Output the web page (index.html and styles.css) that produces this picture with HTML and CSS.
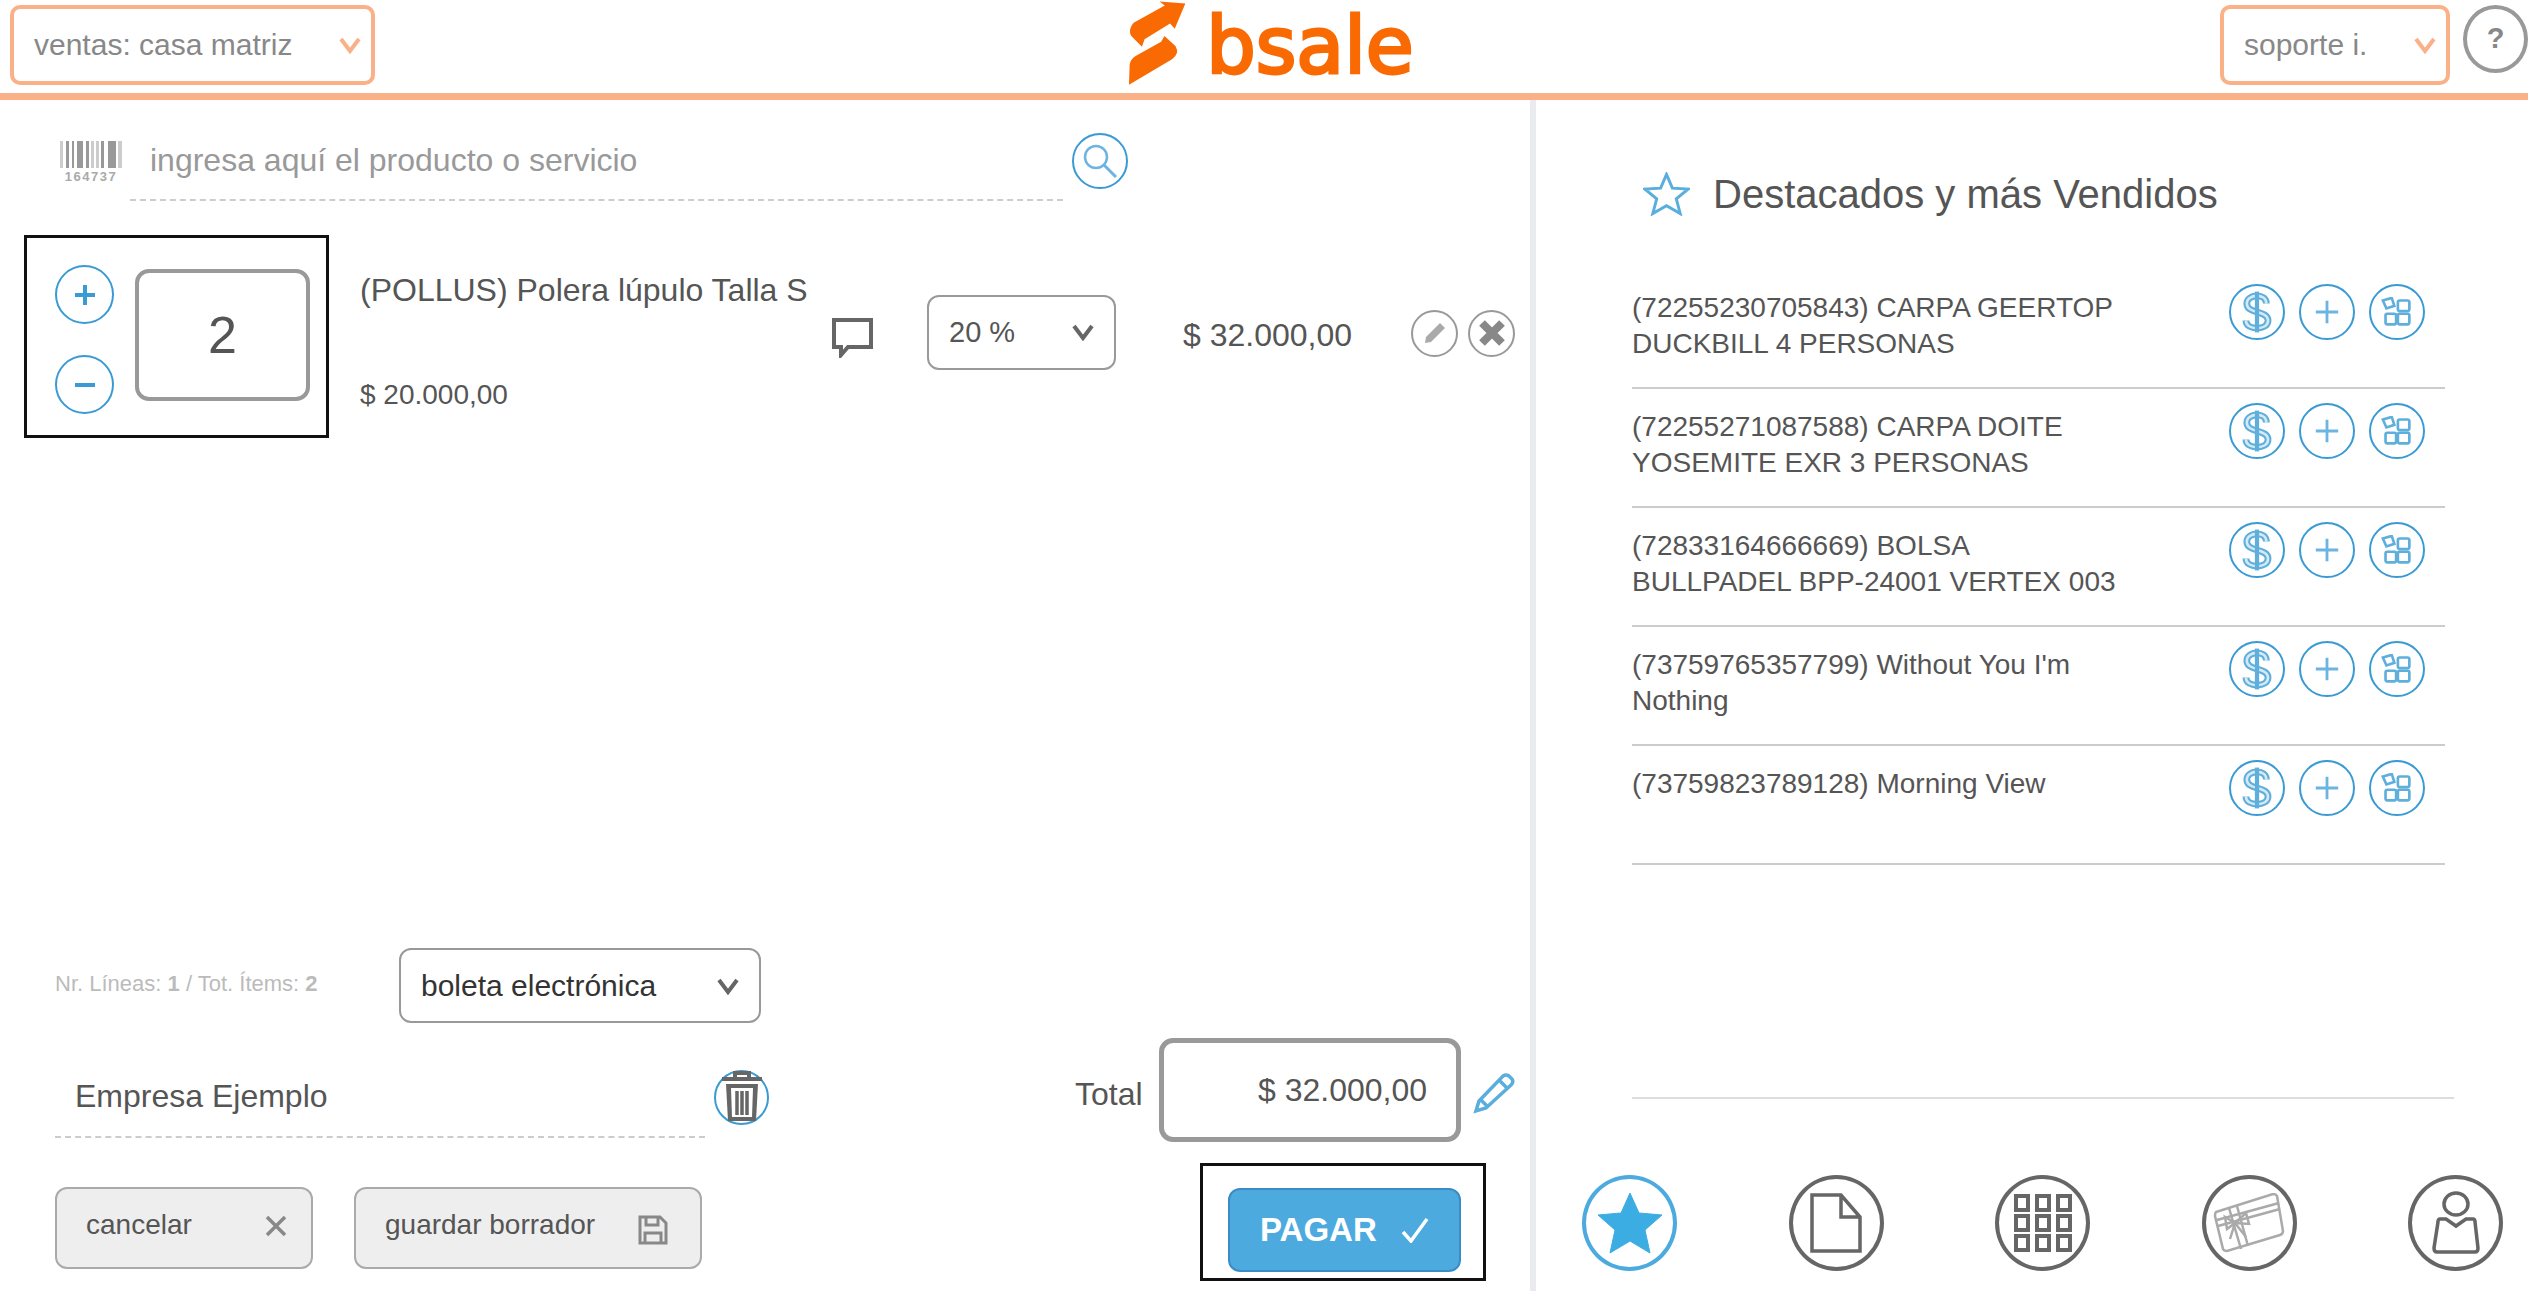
FILE: index.html
```html
<!DOCTYPE html>
<html lang="es">
<head>
  <meta charset="UTF-8" />
  <title>Bsale - Punto de venta</title>
  <link rel="stylesheet" href="styles.css">
</head>
<body>
  <!-- shared icons -->
  <svg class="sprite" width="0" height="0">
    <symbol id="i-chevron" viewBox="0 0 22 18"><path d="M2 3 L11 15 L20 3" fill="none" stroke-width="4"/></symbol>
    <symbol id="i-dollar" viewBox="0 0 40 50">
      <path d="M31 15 C31 9 26 6 20 6 C13 6 8 10 8 15 C8 21 13 23 20 25 C27 27 33 29 33 35 C33 41 27 44 20 44 C13 44 7 41 7 35" fill="none" stroke="#5fafdc" stroke-width="8"/>
      <path d="M31 15 C31 9 26 6 20 6 C13 6 8 10 8 15 C8 21 13 23 20 25 C27 27 33 29 33 35 C33 41 27 44 20 44 C13 44 7 41 7 35" fill="none" stroke="#d5eaf6" stroke-width="3"/>
      <path d="M17.5 1 H22.5 V49 H17.5 Z" fill="#5fafdc"/>
    </symbol>
    <symbol id="i-plus" viewBox="0 0 30 30"><path d="M15 3 V27 M3 15 H27" fill="none" stroke="#6db5e0" stroke-width="3"/></symbol>
    <symbol id="i-group" viewBox="0 0 36 34" >
      <g fill="none" stroke="#5fafdc" stroke-width="3">
        <path d="M2 4 L12 1 L15 10 L6 13 Z"/>
        <rect x="19" y="4" width="13" height="12" rx="2"/>
        <rect x="5" y="19" width="12" height="12" rx="2"/>
        <rect x="19" y="19" width="13" height="12" rx="2"/>
      </g>
    </symbol>
  </svg>

  <header class="top-bar">
    <div class="top-left">
      <div class="orange-select select-branch">
        <span>ventas: casa matriz</span>
        <svg class="chevron"><use href="#i-chevron"/></svg>
      </div>
    </div>
    <div class="logo">
      <svg class="logo-mark" viewBox="85 0 175 255">
        <path d="M180 4 L258 10 L226 86 L212 70 L135 118 L127 140 L95 108 Q84 90 102 68 L196 16 Z"/>
        <path d="M195 108 L228 138 Q242 160 218 178 L88 255 L90 195 Q92 178 108 168 L185 125 Z"/>
      </svg>
      <span class="logo-text">bsale</span>
    </div>
    <div class="top-right">
      <div class="orange-select select-user">
        <span>soporte i.</span>
        <svg class="chevron"><use href="#i-chevron"/></svg>
      </div>
      <div class="help-btn">?</div>
    </div>
  </header>

  <main class="pos">
    <!-- Sale -->
    <section class="sale">
      <div class="search-row">
        <svg class="barcode" viewBox="0 0 62 44">
          <g fill="#999">
            <rect x="0" y="0" width="3" height="27" fill="#ccc"/><rect x="6" y="0" width="3" height="27"/><rect x="12" y="0" width="2" height="27"/>
            <rect x="17" y="0" width="6" height="27"/><rect x="26" y="0" width="3" height="27"/><rect x="31" y="0" width="3" height="27" fill="#ccc"/>
            <rect x="36" y="0" width="3" height="27" fill="#ccc"/><rect x="41" y="0" width="3" height="27"/><rect x="48" y="0" width="8" height="27"/>
            <rect x="58" y="0" width="4" height="27" fill="#ccc"/>
          </g>
          <text x="31" y="40" class="barcode-num" text-anchor="middle">164737</text>
        </svg>
        <div class="search-input">ingresa aquí el producto o servicio</div>
        <div class="round-btn search-btn">
          <svg width="36" height="36" viewBox="0 0 36 36"><circle cx="14" cy="14" r="11" fill="none" stroke="#6db5e0" stroke-width="2.5"/><path d="M22 22 L34 34" stroke="#6db5e0" stroke-width="3"/></svg>
        </div>
      </div>

      <div class="item-row">
        <div class="qty-box">
          <div class="qty-btns">
            <div class="round-btn qty-btn"><svg width="24" height="24" viewBox="0 0 24 24"><path d="M12 2 V22 M2 12 H22" stroke="#3a9ad4" stroke-width="4"/></svg></div>
            <div class="round-btn qty-btn"><svg width="24" height="24" viewBox="0 0 24 24"><path d="M2 12 H22" stroke="#3a9ad4" stroke-width="4"/></svg></div>
          </div>
          <div class="qty-value">2</div>
        </div>
        <div class="item-info">
          <div class="item-name">(POLLUS) Polera lúpulo Talla S</div>
          <div class="item-price">$ 20.000,00</div>
        </div>
        <svg class="comment-icon" viewBox="0 0 41 40"><path d="M2 2 H39 V29 H16 L9 37 V29 H2 Z" fill="none" stroke="#666" stroke-width="4"/></svg>
        <div class="gray-select discount-select">
          <span>20 %</span>
          <svg class="chevron"><use href="#i-chevron"/></svg>
        </div>
        <div class="item-total">$ 32.000,00</div>
        <div class="round-btn gray-btn edit-btn">
          <svg width="26" height="26" viewBox="0 0 26 26"><path d="M18 3 L23 8 L9 22 L3 23 L4 17 Z" fill="#aaa"/></svg>
        </div>
        <div class="round-btn gray-btn remove-btn">
          <svg width="30" height="30" viewBox="0 0 30 30"><path d="M5 5 L25 25 M25 5 L5 25" stroke="#888" stroke-width="8"/></svg>
        </div>
      </div>

      <div class="sale-bottom">
        <div class="doc-row">
          <div class="line-count">Nr. Líneas: <b>1</b> / Tot. Ítems: <b>2</b></div>
          <div class="gray-select doc-select">
            <span>boleta electrónica</span>
            <svg class="chevron"><use href="#i-chevron"/></svg>
          </div>
        </div>

        <div class="client-row">
          <div class="client-name">Empresa Ejemplo</div>
          <div class="round-btn trash-btn">
            <svg width="44" height="54" viewBox="0 0 44 54">
              <path d="M15 7 V2 H29 V7 M2 8 H42" fill="none" stroke="#666" stroke-width="4"/>
              <path d="M6 13 H38 L36 50 H8 Z" fill="#666"/>
              <path d="M11 17 H33 L32 46 H12 Z" fill="#fff"/>
              <path d="M17 20 V44 M22 20 V44 M27 20 V44" stroke="#666" stroke-width="3.5"/>
            </svg>
          </div>
          <div class="total-label">Total</div>
          <div class="total-box">$ 32.000,00</div>
          <svg class="total-edit" viewBox="0 0 42 42">
            <path d="M30 4 Q33 2 36 4 L39 7 Q41 10 38 13 L13 36 L3 39 L6 29 Z M26 8 L35 17 M8 28 L15 35" fill="none" stroke="#5aaedd" stroke-width="3.5"/>
          </svg>
        </div>

        <div class="action-row">
          <div class="soft-btn cancel-btn">
            <span>cancelar</span>
            <svg class="btn-icon" width="22" height="22" viewBox="0 0 22 22"><path d="M2 2 L20 20 M20 2 L2 20" stroke="#888" stroke-width="3.5"/></svg>
          </div>
          <div class="soft-btn draft-btn">
            <span>guardar borrador</span>
            <svg class="btn-icon" width="30" height="30" viewBox="0 0 30 30"><path d="M2 2 H22 L28 8 V28 H2 Z M8 2 V10 H20 V2 M7 28 V18 H23 V28" fill="none" stroke="#888" stroke-width="3"/></svg>
          </div>
          <div class="pay-frame">
            <div class="pay-btn">
              <span>PAGAR</span>
              <svg width="28" height="25" viewBox="0 0 28 25"><path d="M2 14 L10 23 L26 1" fill="none" stroke="#fff" stroke-width="3.5"/></svg>
            </div>
          </div>
        </div>
      </div>
    </section>

    <!-- Catalog -->
    <aside class="catalog">
      <div class="catalog-title">
        <svg class="title-star" viewBox="0 0 48 44"><path d="M24 2 L30 16 L46 17 L34 27 L38 42 L24 34 L10 42 L14 27 L2 17 L18 16 Z" fill="none" stroke="#5aaedd" stroke-width="3"/></svg>
        <h2>Destacados y más Vendidos</h2>
      </div>

      <div class="product-list">
        <div class="product">
          <div class="product-name">(72255230705843) CARPA GEERTOP DUCKBILL 4 PERSONAS</div>
          <div class="product-actions">
            <div class="round-btn"><svg width="34" height="44"><use href="#i-dollar"/></svg></div>
            <div class="round-btn"><svg width="28" height="28"><use href="#i-plus"/></svg></div>
            <div class="round-btn"><svg width="32" height="30"><use href="#i-group"/></svg></div>
          </div>
        </div>
        <div class="product">
          <div class="product-name">(72255271087588) CARPA DOITE YOSEMITE EXR 3 PERSONAS</div>
          <div class="product-actions">
            <div class="round-btn"><svg width="34" height="44"><use href="#i-dollar"/></svg></div>
            <div class="round-btn"><svg width="28" height="28"><use href="#i-plus"/></svg></div>
            <div class="round-btn"><svg width="32" height="30"><use href="#i-group"/></svg></div>
          </div>
        </div>
        <div class="product">
          <div class="product-name">(72833164666669) BOLSA BULLPADEL BPP-24001 VERTEX 003</div>
          <div class="product-actions">
            <div class="round-btn"><svg width="34" height="44"><use href="#i-dollar"/></svg></div>
            <div class="round-btn"><svg width="28" height="28"><use href="#i-plus"/></svg></div>
            <div class="round-btn"><svg width="32" height="30"><use href="#i-group"/></svg></div>
          </div>
        </div>
        <div class="product">
          <div class="product-name">(73759765357799) Without You I'm Nothing</div>
          <div class="product-actions">
            <div class="round-btn"><svg width="34" height="44"><use href="#i-dollar"/></svg></div>
            <div class="round-btn"><svg width="28" height="28"><use href="#i-plus"/></svg></div>
            <div class="round-btn"><svg width="32" height="30"><use href="#i-group"/></svg></div>
          </div>
        </div>
        <div class="product">
          <div class="product-name">(73759823789128) Morning View</div>
          <div class="product-actions">
            <div class="round-btn"><svg width="34" height="44"><use href="#i-dollar"/></svg></div>
            <div class="round-btn"><svg width="28" height="28"><use href="#i-plus"/></svg></div>
            <div class="round-btn"><svg width="32" height="30"><use href="#i-group"/></svg></div>
          </div>
        </div>
      </div>

      <div class="list-end"></div>

      <nav class="tabs">
        <div class="tab tab-active">
          <svg width="66" height="62" viewBox="0 0 66 62"><path d="M33 1 L42 21 L65 23 L48 38 L53 61 L33 49 L13 61 L18 38 L1 23 L24 21 Z" fill="#3cade3" stroke="#3cade3" stroke-width="1" stroke-linejoin="round"/></svg>
        </div>
        <div class="tab">
          <svg width="52" height="60" viewBox="0 0 52 60"><path d="M2 2 H31 L50 24 V58 H2 Z M31 2 V24 H50" fill="none" stroke="#666" stroke-width="3.5"/></svg>
        </div>
        <div class="tab">
          <svg width="58" height="58" viewBox="0 0 58 58">
            <g fill="none" stroke="#666" stroke-width="4">
              <rect x="2" y="2" width="12" height="14"/><rect x="23" y="2" width="12" height="14"/><rect x="44" y="2" width="12" height="14"/>
              <rect x="2" y="22" width="12" height="14"/><rect x="23" y="22" width="12" height="14"/><rect x="44" y="22" width="12" height="14"/>
              <rect x="2" y="42" width="12" height="14"/><rect x="23" y="42" width="12" height="14"/><rect x="44" y="42" width="12" height="14"/>
            </g>
          </svg>
        </div>
        <div class="tab">
          <svg width="72" height="60" viewBox="0 0 72 60">
            <g fill="none" stroke="#aaa" stroke-width="2.5">
              <path d="M3 19 L60 1 Q63 1 64 3 L70 38 Q70 41 67 42 L14 58 Q11 58 10 56 L2 23 Q2 20 3 19 Z"/>
              <path d="M4 27 L66 10 M5 33 L67 16 M16 15 L28 56 M24 13 L35 53"/>
              <path d="M22 30 L12 24 L14 36 Z M22 30 L33 20 L36 31 Z M22 30 L17 46 M22 30 L33 44"/>
            </g>
          </svg>
        </div>
        <div class="tab">
          <svg width="48" height="64" viewBox="0 0 48 64">
            <g fill="none" stroke="#666" stroke-width="3.5">
              <ellipse cx="24" cy="13" rx="12" ry="11"/>
              <path d="M8 28 H14 L24 35 L34 28 H41 Q43 28 43 31 L46 57 Q46 61 43 61 H5 Q2 61 2 57 L6 31 Q6 28 8 28 Z"/>
            </g>
          </svg>
        </div>
      </nav>
    </aside>
  </main>
</body>
</html>
```

FILE: styles.css
```css
* {
  box-sizing: border-box;
}

html, body {
  margin: 0;
  height: 1291px;
  overflow: hidden;
}

body {
  font-family: "Liberation Sans", Arial, sans-serif;
  background: #fff;
  color: #555;
}

.sprite {
  display: block;
  height: 0;
}

/* Top bar */
.top-bar {
  display: grid;
  grid-template-columns: 1fr auto 1fr;
  height: 100px;
  padding-top: 5px;
  border-bottom: 7px solid #fab188;
}

.top-left {
  padding-left: 10px;
}

.top-right {
  display: flex;
  justify-content: flex-end;
  align-items: flex-start;
}

.orange-select {
  display: flex;
  align-items: center;
  justify-content: space-between;
  height: 80px;
  border: 4px solid #fab188;
  border-radius: 10px;
  padding: 0 10px 0 20px;
  font-size: 30px;
  color: #888;
}

.orange-select .chevron {
  stroke: #fab188;
  width: 22px;
  height: 18px;
}

.select-branch {
  width: 365px;
}

.select-user {
  width: 230px;
  margin-right: 13px;
}

.help-btn {
  width: 65px;
  height: 68px;
  border: 4px solid #999;
  border-radius: 50%;
  text-align: center;
  font-size: 29px;
  font-weight: 700;
  line-height: 58px;
  color: #888;
}

.logo {
  display: flex;
  align-items: flex-start;
  margin-left: 14px;
  color: #f96a03;
}

.logo-mark {
  width: 58px;
  height: 85px;
  margin-top: -5px;
  fill: #f96a03;
}

/* DejaVu with a stroke comes nearest to the rounded wordmark */
.logo-text {
  margin-left: 20px;
  font-family: "DejaVu Sans", sans-serif;
  font-size: 78px;
  line-height: 84px;
  margin-top: -1px;
  -webkit-text-stroke: 3px #f96a03;
}

/* Layout */
.pos {
  display: flex;
  height: 1191px;
}

.sale {
  display: flex;
  flex-direction: column;
  width: 1536px;
  border-right: 6px solid #e9ebee;
}

.catalog {
  flex: 1;
  padding-left: 96px;
}

/* Round icon buttons */
.round-btn {
  display: flex;
  align-items: center;
  justify-content: center;
  flex-shrink: 0;
  width: 56px;
  height: 56px;
  border: 2px solid #3a9ad4;
  border-radius: 50%;
}

.gray-btn {
  width: 47px;
  height: 47px;
  border-color: #999;
}

/* Search */
.search-row {
  display: flex;
  align-items: flex-start;
  margin-top: 33px;
  padding-left: 60px;
}

.barcode {
  width: 62px;
  height: 44px;
  margin-top: 8px;
}

.barcode-num {
  font-family: "Liberation Sans", Arial, sans-serif;
  font-size: 13px;
  font-weight: 700;
  letter-spacing: 1.5px;
  fill: #aaa;
}

.search-input {
  width: 933px;
  height: 68px;
  margin-left: 8px;
  padding: 7px 0 0 20px;
  border-bottom: 2px dashed #ccc;
  font-size: 32px;
  line-height: 40px;
  color: #999;
}

.search-btn {
  margin-left: 9px;
}

/* Item line */
.item-row {
  display: flex;
  align-items: center;
  margin-top: 34px;
  padding-left: 24px;
  height: 203px;
}

.qty-box {
  display: flex;
  align-items: center;
  width: 305px;
  height: 203px;
  border: 3px solid #111;
  padding-left: 28px;
}

.qty-btns {
  display: flex;
  flex-direction: column;
  gap: 31px;
  margin-top: 6px;
}

.qty-btn {
  width: 59px;
  height: 59px;
}

.qty-value {
  width: 175px;
  height: 132px;
  margin-left: 21px;
  margin-top: -4px;
  border: 4px solid #999;
  border-radius: 14px;
  text-align: center;
  font-size: 52px;
  line-height: 124px;
}

.item-info {
  display: flex;
  flex-direction: column;
  justify-content: space-between;
  width: 472px;
  height: 138px;
  margin-left: 31px;
  margin-top: 9px;
}

.item-name {
  font-size: 32px;
  line-height: 36px;
  white-space: nowrap;
}

.item-price {
  font-size: 28px;
  line-height: 30px;
}

.comment-icon {
  width: 41px;
  height: 40px;
  margin-top: 3px;
}

.gray-select {
  display: flex;
  align-items: center;
  justify-content: space-between;
  border: 2px solid #999;
  border-radius: 12px;
}

.gray-select .chevron {
  stroke: #666;
  width: 22px;
  height: 18px;
}

.discount-select {
  width: 189px;
  height: 75px;
  margin-left: 54px;
  margin-top: -9px;
  padding: 0 20px 0 20px;
  font-size: 29px;
}

.item-total {
  width: 228px;
  margin-left: 67px;
  margin-top: -3px;
  font-size: 32px;
}

.edit-btn {
  margin-left: 0;
  margin-top: -7px;
}

.remove-btn {
  margin-left: 10px;
  margin-top: -7px;
}

/* Bottom of sale */
.sale-bottom {
  margin-top: auto;
  padding-left: 55px;
  padding-bottom: 10px;
}

.doc-row {
  display: flex;
  align-items: center;
}

.line-count {
  width: 344px;
  font-size: 22px;
  color: #bbb;
  margin-top: -4px;
}

.doc-select {
  width: 362px;
  height: 75px;
  padding: 0 20px;
  font-size: 30px;
  color: #333;
}

.client-row {
  display: flex;
  align-items: flex-start;
  margin-top: 15px;
  height: 104px;
}

.client-name {
  width: 650px;
  height: 100px;
  padding: 38px 0 0 20px;
  border-bottom: 2px dashed #ccc;
  font-size: 32px;
  line-height: 40px;
}

.trash-btn {
  width: 55px;
  height: 55px;
  margin: 32px 0 0 9px;
}

.total-label {
  width: 84px;
  margin-left: 306px;
  margin-top: 36px;
  font-size: 32px;
  line-height: 40px;
}

.total-box {
  width: 302px;
  height: 104px;
  border: 5px solid #999;
  border-radius: 14px;
  padding: 28px 29px 0 0;
  text-align: right;
  font-size: 32px;
  line-height: 38px;
}

.total-edit {
  width: 42px;
  height: 42px;
  margin: 34px 0 0 12px;
}

.action-row {
  display: flex;
  align-items: flex-start;
  margin-top: 21px;
  height: 118px;
}

.soft-btn {
  display: flex;
  justify-content: space-between;
  height: 82px;
  margin-top: 24px;
  padding: 0 24px 0 29px;
  background: #eee;
  border: 2px solid #aaa;
  border-radius: 12px;
  font-size: 28px;
  line-height: 71px;
  color: #555;
}

.btn-icon {
  margin-top: 26px;
}

.cancel-btn {
  width: 258px;
}

.draft-btn {
  width: 348px;
  margin-left: 41px;
  padding-right: 32px;
}

.pay-frame {
  width: 286px;
  height: 118px;
  margin-left: 498px;
  padding: 22px 22px 0 25px;
  border: 3px solid #111;
}

.pay-btn {
  display: flex;
  align-items: center;
  justify-content: space-between;
  width: 233px;
  height: 84px;
  padding: 0 30px 0 30px;
  background: #4caade;
  border: 2px solid #3b8cc4;
  border-radius: 12px;
  color: #fff;
  font-size: 33px;
  font-weight: 700;
}

/* Catalog */
.catalog-title {
  display: flex;
  align-items: center;
  margin-top: 71px;
  padding-left: 11px;
}

.title-star {
  width: 47px;
  height: 44px;
}

.catalog-title h2 {
  margin: 0 0 0 23px;
  font-size: 40px;
  font-weight: 400;
  line-height: 46px;
}

.product-list {
  margin-top: 53px;
  width: 813px;
}

.product {
  display: flex;
  align-items: flex-start;
  height: 119px;
  padding-top: 14px;
  border-bottom: 2px solid #ccc;
}

.product-name {
  width: 495px;
  margin-top: 6px;
  font-size: 28px;
  line-height: 36px;
}

.product-actions {
  display: flex;
  gap: 14px;
  margin-left: auto;
  margin-right: 20px;
}

.list-end {
  width: 822px;
  margin-top: 232px;
  border-bottom: 2px solid #ddd;
}

.tabs {
  display: flex;
  justify-content: space-between;
  width: 921px;
  margin-left: -50px;
  margin-top: 76px;
}

.tab {
  display: flex;
  align-items: center;
  justify-content: center;
  width: 95px;
  height: 96px;
  border: 4px solid #666;
  border-radius: 50%;
}

.tab-active {
  border-color: #4caade;
}
```
